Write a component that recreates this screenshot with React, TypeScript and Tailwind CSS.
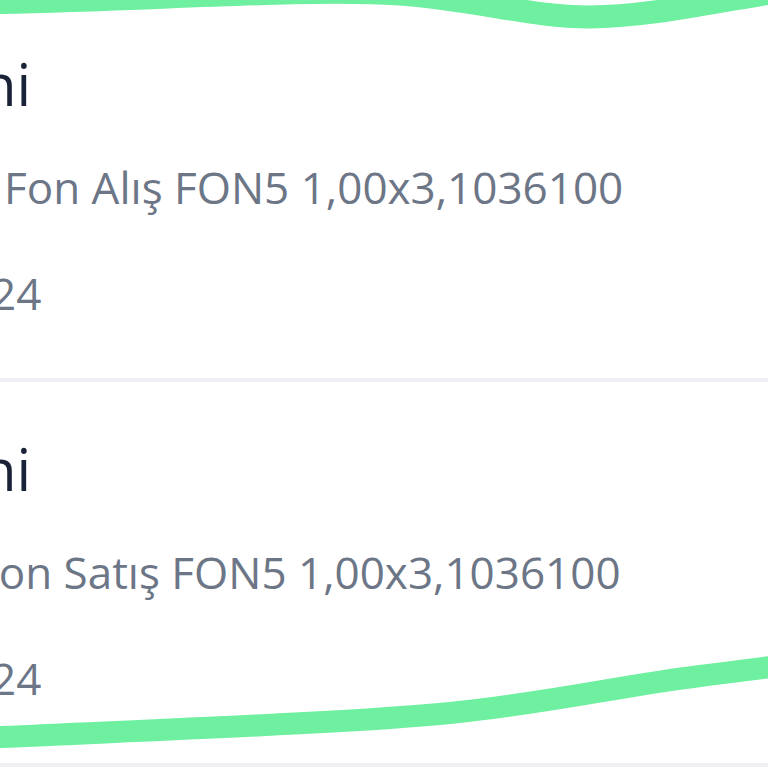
import React from "react";

type Islem = {
  id: number;
  baslik: string;
  aciklama: string;
  tarih: string;
  aciklamaOfset: string;
};

const islemler: Islem[] = [
  {
    id: 1,
    baslik: "ni",
    aciklama: "Fon Alış FON5 1,00x3,1036100",
    tarih: "24",
    aciklamaOfset: "ml-[4px]",
  },
  {
    id: 2,
    baslik: "ni",
    aciklama: "Fon Satış FON5 1,00x3,1036100",
    tarih: "24",
    aciklamaOfset: "-ml-[24px]",
  },
];

export default function App() {
  return (
    <div
      className="relative h-[768px] w-[768px] overflow-hidden bg-white"
      style={{ fontFamily: '"Open Sans", "Noto Sans", sans-serif' }}
    >
      <div className="-mt-[3px] flex flex-col">
        {islemler.map((i) => (
          <div key={i.id} className="flex flex-col">
            {/* Satır içeriği */}
            <div className="flex h-[381px] flex-col overflow-hidden pt-[58px]">
              <div className="-ml-[19px] whitespace-nowrap text-[58px] leading-[58px] text-[#1a2238]">
                {i.baslik}
              </div>
              <div
                className={`mt-[52px] whitespace-nowrap text-[44px] leading-[44px] text-[#6c7686] ${i.aciklamaOfset}`}
              >
                {i.aciklama}
              </div>
              <div className="mt-[62px] -ml-[9px] whitespace-nowrap text-[44px] leading-[44px] text-[#6c7686]">
                {i.tarih}
              </div>
            </div>
            <div className="h-[4px] bg-[#eef0f3]" />
          </div>
        ))}
      </div>

      {/* Yeşil işaretlemeler */}
      <svg
        className="pointer-events-none absolute left-0 top-0"
        width="768"
        height="768"
        viewBox="0 0 768 768"
      >
        <path
          d="M -20 3 C 150 0 300 -12 400 -6 C 480 0 530 17 590 17 C 650 17 720 0 790 -10"
          fill="none"
          stroke="#6ef0a0"
          strokeWidth="23"
          strokeLinecap="round"
        />
        <path
          d="M -20 738 C 150 730 350 723 450 713 C 550 703 620 686 700 676 C 740 671 760 668 790 665"
          fill="none"
          stroke="#6ef0a0"
          strokeWidth="22"
          strokeLinecap="round"
        />
      </svg>
    </div>
  );
}
